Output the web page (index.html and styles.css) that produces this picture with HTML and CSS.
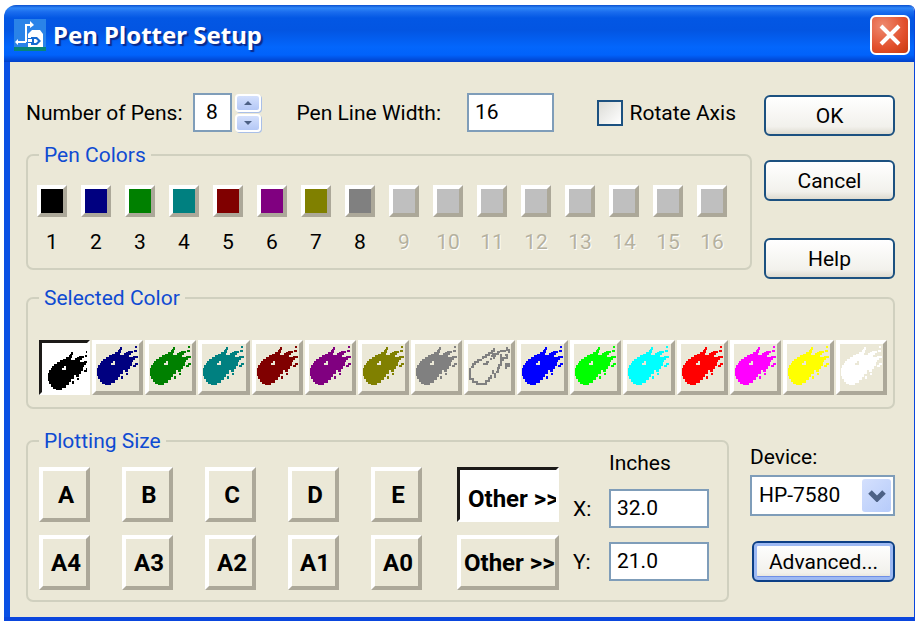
FILE: index.html
```html
<!DOCTYPE html>
<html lang="en">
<head>
<meta charset="utf-8">
<title>Pen Plotter Setup</title>
<link rel="stylesheet" href="styles.css">
</head>
<body>
<svg class="defs" width="0" height="0" aria-hidden="true">
  <symbol id="comet" viewBox="0 0 42 40">
    <path d="M0 22H1V19H3V17H4V15H6V13H9V11H12V9H15V8H18V6H21V4H22V3H23V1H25V4H24V7H23V9H27V7H29V6H31V5H36V7H34V9H32V11H36V10H41V12H38V14H36V16H35V20H33V23H31V26H28V24H26V28H23V31H21V34H18V37H14V39H8V38H5V36H3V33H1V30H0ZM14 17V19H18V15H16V17Z" fill-rule="evenodd"/>
    <path d="M38 0H40V2H38ZM37 4H40V6H37ZM36 19H38V17H41V19H39V21H36ZM29 27H31V29H29ZM24 30H26V33H24Z"/>
  </symbol>
  <symbol id="comet-outline" viewBox="0 0 42 40">
    <path d="M2 21H4V18H6V16H9V14H13M14 13V11H17V9H20V7H23V5H25V2M25 7L23 10H26V8H29V6H31M31 5H37M38 1V4H40V7M32 8V12H38V9H36M35 14H32V19H30V22H29V26H27M36 18H40V20H37V23M24 24V28M26 27V32M22 29V32H20V35H17V38H8V36H4V33H1V22M14 18H19M17 16H20M22 12V14M25 11V13" fill="none" stroke="currentColor" stroke-width="1.6"/>
  </symbol>
</svg>
<main class="window">
  <header class="titlebar">
    <svg class="logo" viewBox="0 0 32 32" aria-hidden="true">
      <rect width="32" height="32" fill="#2a83e8"/>
      <path d="M0 28H32V32H0Z" fill="#07857a"/>
      <path d="M12 23V6H18" fill="none" stroke="#fff" stroke-width="2"/>
      <path d="M16 2L20 6L16 9ZM4 20V26L1 23ZM3 22H12V24H3Z" fill="#fff"/>
      <path d="M14 15L18 11H26L29 15V28H14Z" fill="#fff"/>
      <path d="M17 18H23L27 22L23 26H17V24H14V23H18V20H14V19H17ZM20 20V24H22L24 22L22 20Z" fill="#176bd1"/>
    </svg>
    <h1>Pen Plotter Setup</h1>
    <button class="close" type="button" aria-label="Close"><svg viewBox="0 0 24 24" aria-hidden="true"><path d="M3 3L21 21M21 3L3 21" stroke="#fff" stroke-width="4"/></svg></button>
  </header>
  <form class="content">
    <div class="upper">
      <div class="upper-main">
        <div class="settings">
          <label for="pens">Number of Pens:</label>
          <input class="field pens" id="pens" type="text" value="8">
          <span class="spinner">
            <button type="button" aria-label="More pens"><svg viewBox="0 0 8 4" aria-hidden="true"><path d="M0 4L4 0L8 4Z"/></svg></button>
            <button type="button" aria-label="Fewer pens"><svg viewBox="0 0 8 4" aria-hidden="true"><path d="M0 0L4 4L8 0Z"/></svg></button>
          </span>
          <label class="width-label" for="line">Pen Line Width:</label>
          <input class="field line" id="line" type="text" value="16">
          <label class="rotate"><input type="checkbox">Rotate Axis</label>
        </div>
        <fieldset class="pen-colors">
          <legend>Pen Colors</legend>
          <div class="pen-grid">
            <label class="pen"><button type="button" class="swatch black"></button>1</label>
            <label class="pen"><button type="button" class="swatch navy"></button>2</label>
            <label class="pen"><button type="button" class="swatch green"></button>3</label>
            <label class="pen"><button type="button" class="swatch teal"></button>4</label>
            <label class="pen"><button type="button" class="swatch maroon"></button>5</label>
            <label class="pen"><button type="button" class="swatch purple"></button>6</label>
            <label class="pen"><button type="button" class="swatch olive"></button>7</label>
            <label class="pen"><button type="button" class="swatch gray"></button>8</label>
            <label class="pen off"><button type="button" class="swatch" disabled></button>9</label>
            <label class="pen off"><button type="button" class="swatch" disabled></button>10</label>
            <label class="pen off"><button type="button" class="swatch" disabled></button>11</label>
            <label class="pen off"><button type="button" class="swatch" disabled></button>12</label>
            <label class="pen off"><button type="button" class="swatch" disabled></button>13</label>
            <label class="pen off"><button type="button" class="swatch" disabled></button>14</label>
            <label class="pen off"><button type="button" class="swatch" disabled></button>15</label>
            <label class="pen off"><button type="button" class="swatch" disabled></button>16</label>
          </div>
        </fieldset>
      </div>
      <div class="actions">
        <button class="push" type="button">OK</button>
        <button class="push" type="button">Cancel</button>
        <button class="push help" type="button">Help</button>
      </div>
    </div>
    <fieldset class="selected">
      <legend>Selected Color</legend>
      <div class="color-grid">
        <button type="button" class="tile pressed ink-black" aria-label="Black"><svg><use href="#comet"/></svg></button>
        <button type="button" class="tile ink-navy" aria-label="Navy"><svg><use href="#comet"/></svg></button>
        <button type="button" class="tile ink-green" aria-label="Green"><svg><use href="#comet"/></svg></button>
        <button type="button" class="tile ink-teal" aria-label="Teal"><svg><use href="#comet"/></svg></button>
        <button type="button" class="tile ink-maroon" aria-label="Maroon"><svg><use href="#comet"/></svg></button>
        <button type="button" class="tile ink-purple" aria-label="Purple"><svg><use href="#comet"/></svg></button>
        <button type="button" class="tile ink-olive" aria-label="Olive"><svg><use href="#comet"/></svg></button>
        <button type="button" class="tile ink-gray" aria-label="Gray"><svg><use href="#comet"/></svg></button>
        <button type="button" class="tile ink-gray" aria-label="Light gray"><svg><use href="#comet-outline"/></svg></button>
        <button type="button" class="tile ink-blue" aria-label="Blue"><svg><use href="#comet"/></svg></button>
        <button type="button" class="tile ink-lime" aria-label="Lime"><svg><use href="#comet"/></svg></button>
        <button type="button" class="tile ink-cyan" aria-label="Cyan"><svg><use href="#comet"/></svg></button>
        <button type="button" class="tile ink-red" aria-label="Red"><svg><use href="#comet"/></svg></button>
        <button type="button" class="tile ink-magenta" aria-label="Magenta"><svg><use href="#comet"/></svg></button>
        <button type="button" class="tile ink-yellow" aria-label="Yellow"><svg><use href="#comet"/></svg></button>
        <button type="button" class="tile ink-white" aria-label="White"><svg><use href="#comet"/></svg></button>
      </div>
    </fieldset>
    <div class="lower">
      <fieldset class="plotting">
        <legend>Plotting Size</legend>
        <div class="plotting-body">
          <div class="size-grid">
            <button type="button" class="tile">A</button>
            <button type="button" class="tile">B</button>
            <button type="button" class="tile">C</button>
            <button type="button" class="tile">D</button>
            <button type="button" class="tile">E</button>
            <button type="button" class="tile other pressed">Other &gt;&gt;</button>
            <button type="button" class="tile">A4</button>
            <button type="button" class="tile">A3</button>
            <button type="button" class="tile">A2</button>
            <button type="button" class="tile">A1</button>
            <button type="button" class="tile">A0</button>
            <button type="button" class="tile other">Other &gt;&gt;</button>
          </div>
          <div class="inches">
            <span class="unit">Inches</span>
            <label for="size-x">X:</label>
            <input class="field" id="size-x" type="text" value="32.0">
            <label for="size-y">Y:</label>
            <input class="field" id="size-y" type="text" value="21.0">
          </div>
        </div>
      </fieldset>
      <div class="device">
        <label for="device">Device:</label>
        <div class="select">
          <select id="device"><option>HP-7580</option></select>
          <span class="arrow"><svg viewBox="0 0 18 12" aria-hidden="true"><path d="M2 2L9 9L16 2" fill="none" stroke="#4d6185" stroke-width="5"/></svg></span>
        </div>
        <button class="push default" type="button">Advanced...</button>
      </div>
    </div>
  </form>
</main>
</body>
</html>
```
FILE: styles.css
```css
* { box-sizing: border-box; }
body {
  margin: 0;
  background: #fff;
  color: #000;
  font: 21px/24px Roboto, sans-serif;
}
button, input, select { font: inherit; color: inherit; margin: 0; padding: 0; }
label { white-space: nowrap; }
.defs { position: absolute; }

.window {
  margin: 5px 0 0 4px;
  min-height: calc(100vh - 5px);
  display: flex;
  flex-direction: column;
  border: solid #0a46dd;
  border-width: 0 1px 4px 0;
  border-radius: 12px 6px 0 0;
  background: #ebe8d7;
  overflow: hidden;
}
.titlebar {
  display: flex;
  align-items: center;
  height: 57px;
  padding: 2px 4px 0 10px;
  background: linear-gradient(#0a50cf 0, #2f87f8 3px, #1a6cee 7px, #0357e4 13px, #0355e2 25px, #0366fc 42px, #0162fb 50px, #0140c9 100%);
}
.logo { width: 32px; height: 32px; flex: none; }
h1 {
  flex: 1;
  margin: 0 0 0 7px;
  color: #fff;
  font: bold 24px/32px "Noto Sans", sans-serif;
  text-shadow: 2px 2px 1px #0a2a8c;
}
.close {
  width: 40px;
  height: 40px;
  padding: 6px;
  border: 2px solid #fff;
  border-radius: 6px;
  background: radial-gradient(circle at 30% 25%, #ee8a70, #e2502c 60%, #c8390f);
}
.close svg { display: block; width: 24px; height: 24px; }

.content {
  flex: 1;
  padding: 31px 19px 15px 16px;
  border-left: 6px solid #0a50e4;
}
.upper { display: grid; grid-template-columns: 1fr 131px; gap: 12px; }
.settings { display: flex; align-items: center; }
.field {
  width: 100%;
  height: 39px;
  padding: 0 6px 2px;
  border: 2px solid #7f9db9;
  background: #fff;
}
.pens { width: 39px; margin-left: 10px; padding: 0 0 2px; text-align: center; }
.spinner { display: flex; flex-direction: column; gap: 2px; margin-left: 3px; }
.spinner button {
  display: grid;
  place-items: center;
  width: 26px;
  height: 18px;
  border: 2px solid #fff;
  border-radius: 4px;
  background: linear-gradient(#d4e0fc, #b4c8f6);
  box-shadow: 1px 1px 0 #a9bfe8;
}
.spinner svg { width: 8px; height: 4px; fill: #4d6185; }
.width-label { margin-left: 36px; }
.line { width: 87px; margin-left: 26px; }
.rotate { display: flex; align-items: center; gap: 7px; margin: 0 16px 0 auto; }
.rotate input {
  appearance: none;
  width: 26px;
  height: 26px;
  border: 2px solid #1c5180;
  background: linear-gradient(135deg, #dcdcd7, #fff);
}

fieldset {
  margin: 0;
  padding: 0;
  min-width: 0;
  border: 2px solid #d0d0bf;
  border-radius: 7px;
}
legend { margin-left: 11px; padding: 0 5px; color: #0f4bd2; }

.pen-colors { margin-top: 11px; }
.pen-grid { display: grid; grid-template-columns: repeat(16, 1fr); padding: 18px 16px 14px 2px; }
.pen { display: flex; flex-direction: column; align-items: center; gap: 13px; }
.pen.off { color: #b5b19f; text-shadow: 1px 1px 0 #fff; }
.swatch {
  width: 30px;
  height: 32px;
  border: solid;
  border-width: 4px;
  border-color: #fff #aca899 #aca899 #fff;
  background: #bfbfbf;
}
.black { background: #000; }
.navy { background: #000080; }
.green { background: #008000; }
.teal { background: #008080; }
.maroon { background: #800000; }
.purple { background: #800080; }
.olive { background: #808000; }
.gray { background: #808080; }

.actions { display: flex; flex-direction: column; gap: 24px; padding-top: 2px; }
.push {
  height: 41px;
  padding: 0;
  border: 2px solid #1c5180;
  border-radius: 6px;
  background: linear-gradient(#fff, #f2f1ec 80%, #dedbd0);
}
.help { margin-top: 13px; }

.selected { margin-top: 7px; }
.color-grid { display: grid; grid-template-columns: repeat(16, 1fr); gap: 2px; padding: 30px 6px 12px 11px; }
.tile {
  height: 55px;
  padding: 0 0 0 3px;
  overflow: hidden;
  border: 4px solid;
  border-color: #fff #aca899 #aca899 #fff;
  background: #ebe8d7;
  font: bold 24px/24px Roboto, sans-serif;
  white-space: nowrap;
}
.tile svg {
  display: block;
  width: 42px;
  height: 40px;
  margin: 0 0 4px -2px;
  fill: currentColor;
  shape-rendering: crispEdges;
}
.tile.pressed {
  border-width: 3px;
  border-color: #1c1a18 #fff #fff #1c1a18;
  background: #fff;
  padding: 8px 0 0 8px;
}
.ink-black { color: #000; }
.ink-navy { color: #000080; }
.ink-green { color: #008000; }
.ink-teal { color: #008080; }
.ink-maroon { color: #800000; }
.ink-purple { color: #800080; }
.ink-olive { color: #808000; }
.ink-gray { color: #808080; }
.ink-blue { color: #00f; }
.ink-lime { color: #0f0; }
.ink-cyan { color: #0ff; }
.ink-red { color: #f00; }
.ink-magenta { color: #f0f; }
.ink-yellow { color: #ff0; }
.ink-white { color: #fff; }

.lower { display: grid; grid-template-columns: 1fr 145px; gap: 21px; margin-top: 20px; }
.plotting-body { display: flex; justify-content: space-between; padding: 0 18px 10px 11px; }
.size-grid {
  display: grid;
  grid-template-columns: repeat(5, 51px) 105px;
  column-gap: 32px;
  row-gap: 13px;
  padding-top: 14px;
}
.other { width: 102px; justify-self: end; text-align: left; }
.inches {
  display: grid;
  grid-template-columns: 36px 100px;
  row-gap: 14px;
  align-content: start;
  align-items: center;
  margin-top: -2px;
}
.unit { grid-column: 2; }
.device { display: flex; flex-direction: column; padding-top: 16px; }
.select { position: relative; margin-top: 6px; }
.select select {
  appearance: none;
  display: block;
  width: 100%;
  height: 41px;
  padding: 0 36px 2px 7px;
  border: 2px solid #7f9db9;
  border-radius: 0;
  background: #fff;
}
.arrow {
  position: absolute;
  top: 4px;
  right: 4px;
  bottom: 4px;
  display: grid;
  place-items: center;
  width: 29px;
  border-radius: 3px;
  background: linear-gradient(135deg, #d4e0fd, #b6cbfa);
  pointer-events: none;
}
.arrow svg { width: 18px; height: 12px; }
.default {
  margin: 25px 0 0 2px;
  border-color: #0c3f86;
  box-shadow: inset 0 0 0 3px #9db9f3, inset 0 -4px 0 #6f8fe6;
}
```
